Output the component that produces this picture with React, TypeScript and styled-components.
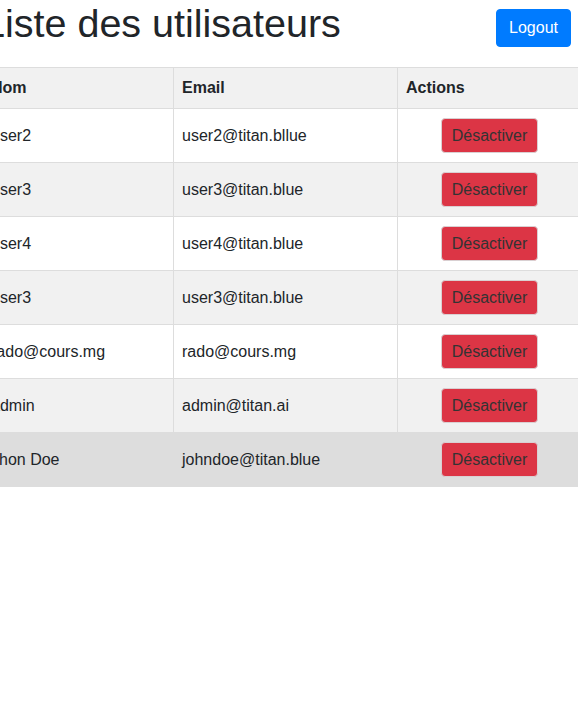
import styled, { createGlobalStyle } from 'styled-components';

type User = {
	name: string;
	email: string;
};

const users: User[] = [
	{ name: 'user2', email: 'user2@titan.bllue' },
	{ name: 'user3', email: 'user3@titan.blue' },
	{ name: 'user4', email: 'user4@titan.blue' },
	{ name: 'user3', email: 'user3@titan.blue' },
	{ name: 'rado@cours.mg', email: 'rado@cours.mg' },
	{ name: 'admin', email: 'admin@titan.ai' },
	{ name: 'Jhon Doe', email: 'johndoe@titan.blue' },
];

const GlobalStyle = createGlobalStyle`
	html, body {
		margin: 0;
		padding: 0;
		background: #fff;
		overflow: hidden;
	}
	body {
		font-family: "Liberation Sans", Arial, sans-serif;
		color: #212529;
		font-size: 16px;
	}
`;

// the page is shown scrolled a little to the right
const Page = styled.div`
	margin-left: -18px;
	width: 599px;
`;

const Header = styled.header`
	display: flex;
	justify-content: space-between;
	align-items: flex-start;
	padding: 0 10px 0 1px;
`;

const Title = styled.h1`
	margin: 0 0 21px;
	font-size: 39.5px;
	font-weight: 400;
	line-height: 46px;
	color: #212529;
`;

const LogoutButton = styled.button`
	margin-top: 9px;
	padding: 6px 12px;
	font-family: inherit;
	font-size: 16px;
	line-height: 24px;
	color: #fff;
	background: #007bff;
	border: 1px solid #007bff;
	border-radius: 4px;
	cursor: pointer;
`;

const Table = styled.table`
	width: 599px;
	table-layout: fixed;
	border-collapse: collapse;
`;

const HeadCell = styled.th`
	padding: 9px 8px 10px;
	line-height: 21px;
	text-align: left;
	font-weight: 700;
	background: #f1f1f1;
	border: 1px solid #ddd;
`;

const Row = styled.tr<{ $striped?: boolean; $hover?: boolean }>`
	background: ${(p) => (p.$hover ? '#dddddd' : p.$striped ? '#f1f1f1' : '#fff')};
`;

const Cell = styled.td<{ $center?: boolean }>`
	padding: 9px 8px;
	line-height: 19px;
	vertical-align: middle;
	text-align: ${(p) => (p.$center ? 'center' : 'left')};
	border: 1px solid #ddd;
`;

const DeactivateButton = styled.button`
	padding: 7px 10px;
	font-family: inherit;
	font-size: 16px;
	line-height: 19px;
	color: #333;
	background: #dc3545;
	border: 1px solid #d9d0d2;
	border-radius: 4px;
	cursor: pointer;
`;

export default function App() {
	return (
		<>
			<GlobalStyle />
			<Page>
				<Header>
					<Title>Liste des utilisateurs</Title>
					<LogoutButton>Logout</LogoutButton>
				</Header>
				<Table>
					<colgroup>
						<col style={{ width: 191 }} />
						<col style={{ width: 224 }} />
						<col style={{ width: 184 }} />
					</colgroup>
					<thead>
						<tr>
							<HeadCell>Nom</HeadCell>
							<HeadCell>Email</HeadCell>
							<HeadCell>Actions</HeadCell>
						</tr>
					</thead>
					<tbody>
						{users.map((u, i) => (
							<Row key={i} $striped={i % 2 === 1} $hover={i === users.length - 1}>
								<Cell>{u.name}</Cell>
								<Cell>{u.email}</Cell>
								<Cell $center>
									<DeactivateButton>Désactiver</DeactivateButton>
								</Cell>
							</Row>
						))}
					</tbody>
				</Table>
			</Page>
		</>
	);
}
